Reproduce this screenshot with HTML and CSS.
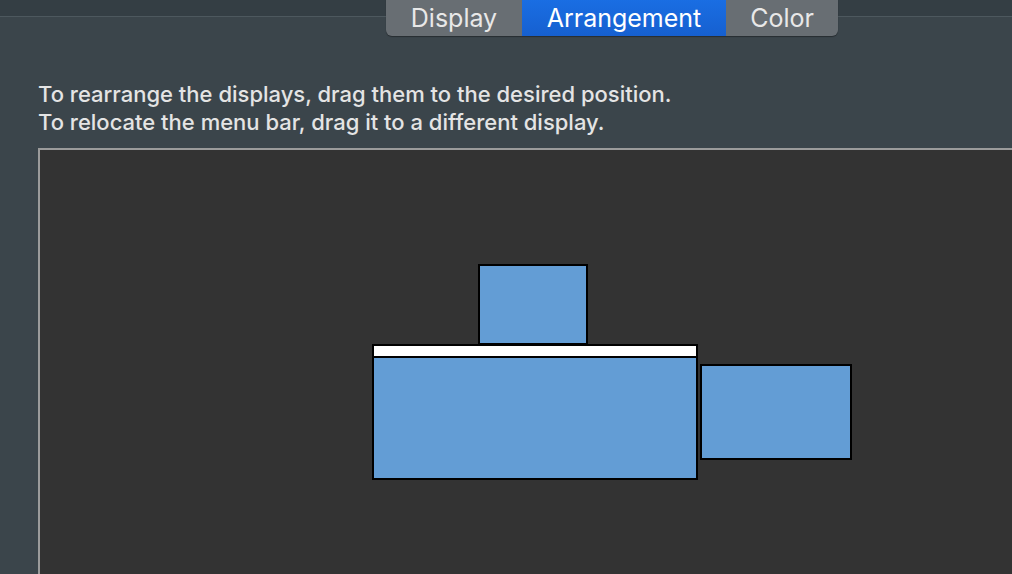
FILE: index.html
```html
<!DOCTYPE html>
<html>
<head>
<meta charset="utf-8">
<link rel="stylesheet" href="styles.css">
</head>
<body>
<div class="window">
  <header class="toolbar">
    <div class="segmented">
      <div class="seg">Display</div>
      <div class="seg active">Arrangement</div>
      <div class="seg">Color</div>
    </div>
  </header>
  <main class="content">
    <p class="hint">To rearrange the displays, drag them to the desired position.<br>To relocate the menu bar, drag it to a different display.</p>
    <div class="canvas">
      <div class="disp d-top"></div>
      <div class="disp d-main"><div class="menubar"></div></div>
      <div class="disp d-right"></div>
    </div>
  </main>
</div>
</body>
</html>
```

FILE: styles.css
```css
* { box-sizing: border-box; }
html, body { margin: 0; padding: 0; }
body {
  width: 1012px;
  height: 574px;
  overflow: hidden;
  background: #3b454b;
  font-family: Inter, "Liberation Sans", Arial, sans-serif;
  color: #e6e6e6;
}
.window { display: flex; flex-direction: column; height: 100%; }
.toolbar {
  height: 17px;
  background: #343e44;
  border-bottom: 1px solid #4d585e;
  display: flex;
  justify-content: flex-start;
  padding-left: 386px;
  position: relative;
  z-index: 2;
}
.segmented {
  display: flex;
  height: 42px;
  margin-top: -6px;
  border-radius: 6px;
  overflow: hidden;
  background: #686e73;
  box-shadow: 0 1px 1px rgba(0,0,0,0.35);
}
.seg {
  display: flex;
  align-items: center;
  justify-content: center;
  padding-top: 5px;
  font-size: 25px;
  color: #e8e8e8;
}
.seg:nth-child(1) { width: 136px; }
.seg:nth-child(2) { width: 204px; }
.seg:nth-child(3) { width: 112px; }
.seg.active {
  background: linear-gradient(#1a70e6, #1660d0);
  color: #fff;
}
.content {
  flex: 1;
  display: flex;
  flex-direction: column;
  padding-left: 38px;
}
.hint {
  margin: 63px 0 0 0;
  font-size: 22px;
  line-height: 28px;
  font-weight: 500;
  color: #e4e4e4;
}
.canvas {
  margin-top: 12px;
  flex: 1;
  background: #333333;
  border: 2px solid #9b9b9b;
  border-right: none;
  border-bottom: none;
  position: relative;
}
.disp {
  position: absolute;
  background: #639dd5;
  border: 2px solid #000;
}
.d-top { left: 438px; top: 114px; width: 110px; height: 81px; }
.d-main { left: 332px; top: 194px; width: 326px; height: 136px; }
.d-right { left: 660px; top: 214px; width: 152px; height: 96px; }
.menubar {
  height: 12px;
  background: #fff;
  border-bottom: 2px solid #000;
}
```
